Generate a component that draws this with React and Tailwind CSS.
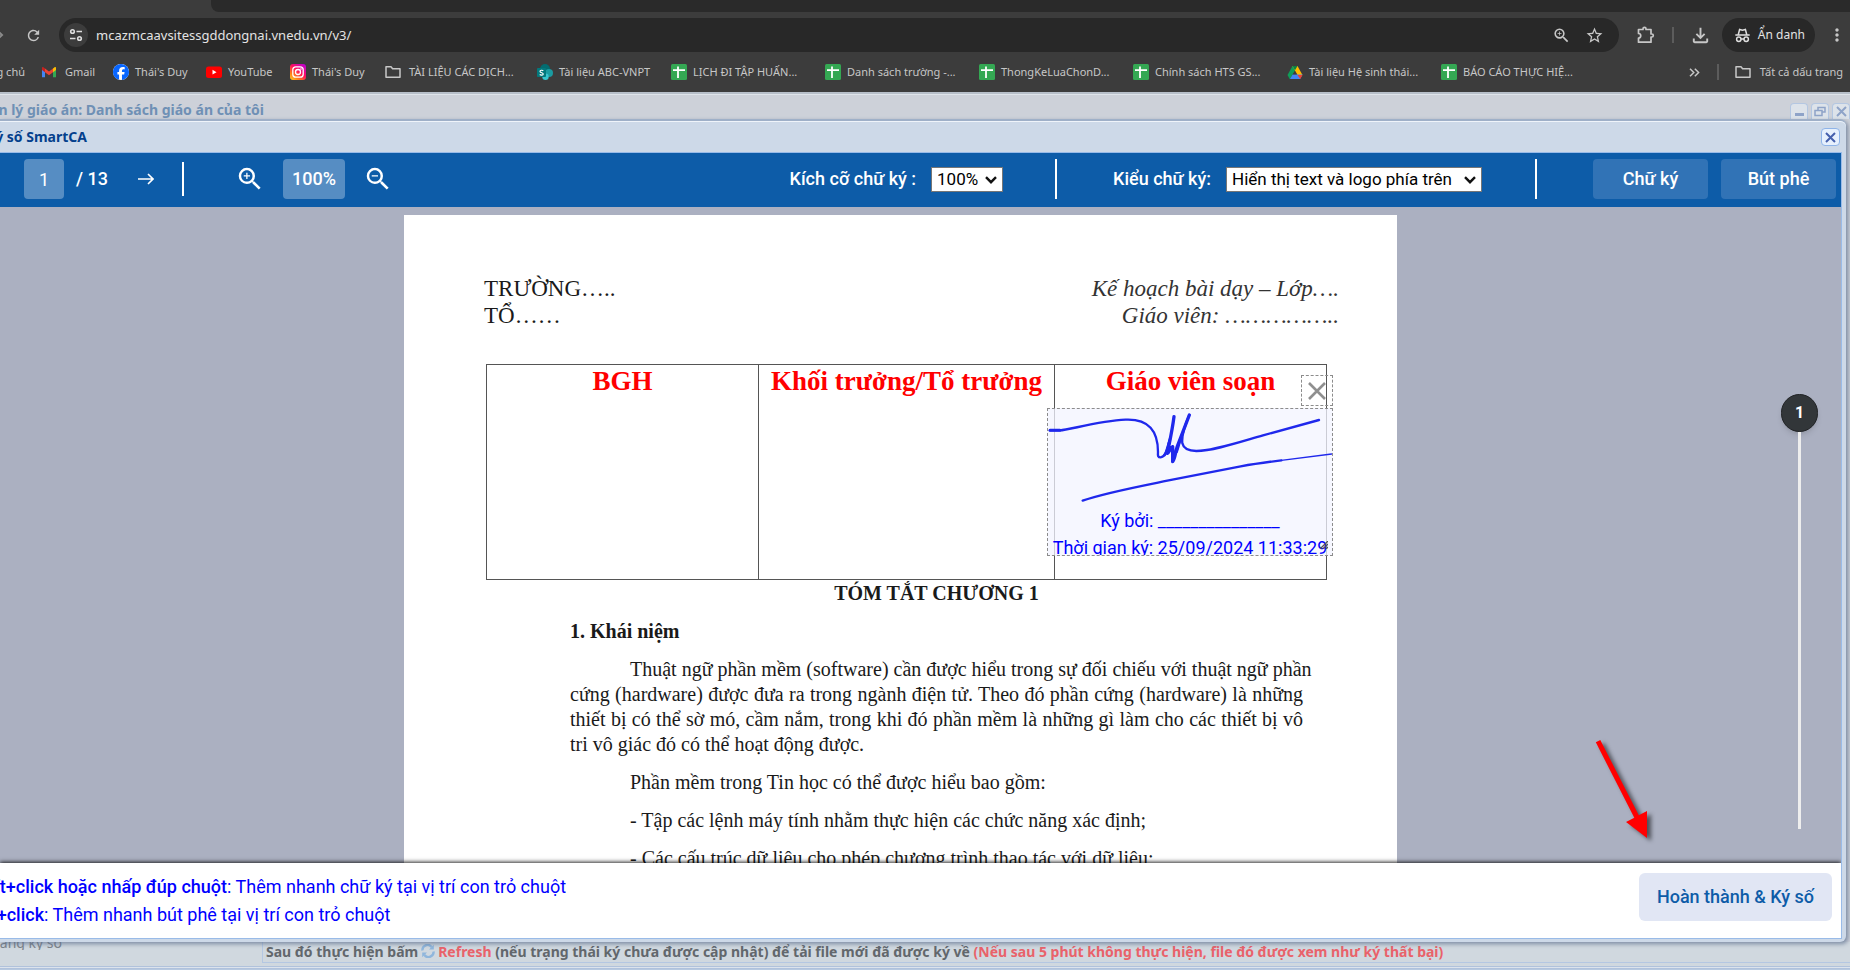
import React from "react";
import { FaFacebook } from "react-icons/fa6";
import {
  MdRefresh,
  MdZoomIn,
  MdZoomOut,
  MdStarBorder,
  MdOutlineFileDownload,
  MdMoreVert,
} from "react-icons/md";

const noto = "font-['Noto_Sans',sans-serif]";

function FolderIcon() {
  return (
    <svg width="16" height="16" viewBox="0 0 16 16" fill="none" stroke="#c7c7c7" strokeWidth="1.5">
      <path d="M1 13.2V2.8h5l1.6 2H15v8.400z" strokeLinejoin="round" />
    </svg>
  );
}

function SheetIcon() {
  return (
    <svg width="16" height="16" viewBox="0 0 16 16">
      <rect width="16" height="16" rx="1.5" fill="#34a853" />
      <path d="M2 6.200h12M7 2.500v11.500" stroke="#fff" strokeWidth="1.800" />
    </svg>
  );
}

function GmailIcon() {
  return (
    <svg width="16" height="16" viewBox="0 0 16 16">
      <path d="M1 4v9.300h3V7z" fill="#4285f4" />
      <path d="M15 4v9.300h-3V7z" fill="#34a853" />
      <path d="M12 4.500 13.600 3.200c.6-.4 1.400 0 1.400.9V6l-3 2.200z" fill="#fbbc04" />
      <path d="M4 4.500 2.400 3.200C1.800 2.800 1 3.200 1 4.100V6l3 2.200z" fill="#c5221f" />
      <path d="M4 4.400 8 7.400l4-3v3.800l-4 3-4-3z" fill="#ea4335" />
    </svg>
  );
}

function FacebookIcon() {
  return (
    <span className="flex size-4 rounded-full bg-white">
      <FaFacebook size={16} color="#0866ff" />
    </span>
  );
}

function YouTubeIcon() {
  return (
    <svg width="16" height="16" viewBox="0 0 16 16">
      <rect y="2.500" width="16" height="11.500" rx="2.500" fill="#f00" />
      <path d="m6.500 5.800 4 2.400-4 2.400z" fill="#fff" />
    </svg>
  );
}

function InstagramIcon() {
  return (
    <svg width="16" height="16" viewBox="0 0 16 16" fill="none">
      <defs>
        <linearGradient id="insta" x1="0.1" y1="1" x2="0.9" y2="0">
          <stop offset="0" stopColor="#ffc327" />
          <stop offset="0.25" stopColor="#ff7a18" />
          <stop offset="0.55" stopColor="#ff0f5f" />
          <stop offset="1" stopColor="#b900d6" />
        </linearGradient>
      </defs>
      <rect width="16" height="16" rx="3" fill="url(#insta)" />
      <rect x="2.800" y="2.800" width="10.400" height="10.400" rx="3" stroke="#fff" strokeWidth="1.300" />
      <circle cx="8" cy="8" r="2.500" stroke="#fff" strokeWidth="1.300" />
      <circle cx="11" cy="5" r=".8" fill="#fff" />
    </svg>
  );
}

function SharePointIcon() {
  return (
    <svg width="16" height="16" viewBox="0 0 16 16">
      <circle cx="8" cy="5" r="5" fill="#036c70" />
      <circle cx="12" cy="9" r="4" fill="#1a9ba1" />
      <circle cx="8.500" cy="12.800" r="3.200" fill="#37c6d0" />
      <rect y="4" width="9" height="9" rx="1" fill="#03787c" />
      <path d="M6.300 6.700C5.400 6 3 6 3 7.500s3.200 1 3.200 2.400-2.300 1.500-3.500.7" fill="none" stroke="#fff" strokeWidth="1.200" />
    </svg>
  );
}

function DriveIcon() {
  return (
    <svg width="16" height="16" viewBox="0 0 16 16">
      <path d="M5.500 2h5l-5.200 9L2.800 15.200.5 11z" fill="#0f9d58" />
      <path d="M5.500 2h5l5 9h-5z" fill="#ffba00" />
      <path d="M5.600 10.500h9.900L13.200 15H2.900z" fill="#4285f4" />
      <path d="M5.500 2h5L8 6.300z" fill="#0b8043" />
      <path d="M15.500 11h-5l2.700 4z" fill="#ea4335" />
      <path d="M6.300 10.300 8 7.300l1.700 3z" fill="#3c3c3c" />
    </svg>
  );
}

const bookmarks = [
  { w: "w-[72px]", gap: "gap-2", icon: <GmailIcon />, label: "Gmail" },
  { w: "w-[93px]", gap: "gap-1.5", icon: <FacebookIcon />, label: "Thái's Duy" },
  { w: "w-[84px]", gap: "gap-1.5", icon: <YouTubeIcon />, label: "YouTube" },
  { w: "w-[95px]", gap: "gap-1.5", icon: <InstagramIcon />, label: "Thái's Duy" },
  { w: "w-[152px]", gap: "gap-2", icon: <FolderIcon />, label: "TÀI LIỆU CÁC DỊCH..." },
  { w: "w-[134px]", gap: "gap-1.5", icon: <SharePointIcon />, label: "Tài liệu ABC-VNPT" },
  { w: "w-[154px]", gap: "gap-1.5", icon: <SheetIcon />, label: "LỊCH ĐI TẬP HUẤN..." },
  { w: "w-[154px]", gap: "gap-1.5", icon: <SheetIcon />, label: "Danh sách trường -..." },
  { w: "w-[154px]", gap: "gap-1.5", icon: <SheetIcon />, label: "ThongKeLuaChonD..." },
  { w: "w-[154px]", gap: "gap-1.5", icon: <SheetIcon />, label: "Chính sách HTS GS..." },
  { w: "w-[154px]", gap: "gap-1.5", icon: <DriveIcon />, label: "Tài liệu Hệ sinh thái..." },
  { w: "w-[154px]", gap: "gap-1.5", icon: <SheetIcon />, label: "BÁO CÁO THỰC HIỆ..." },
];

function BrowserChrome() {
  return (
    <header className={`shrink-0 bg-[#3c3c3c] text-[#c7c7c7] ${noto}`}>
      <div className="flex h-3">
        <div className="w-[211px]" />
        <div className="flex-1 rounded-bl-lg bg-[#2a2a2a]" />
      </div>
      <div className="flex h-[46px] items-center pr-[3px]">
        <svg width="6" height="12" viewBox="0 0 6 12" className="mr-[19px]">
          <path d="M-3 1.500 2 6l-5 4.500" fill="none" stroke="#8a8a8a" strokeWidth="2" />
        </svg>
        <button aria-label="Tải lại" className="flex size-4 items-center justify-center">
          <MdRefresh size={17} className="shrink-0" />
        </button>
        <div className="ml-[18px] flex h-[34px] flex-1 items-center rounded-full bg-[#282828] pr-[15px] pl-[5px]">
          <span className="flex size-6 items-center justify-center rounded-full bg-[#3c3c3c]">
            <svg width="14" height="14" viewBox="0 0 14 14" fill="none" stroke="#dedede" strokeWidth="1.600">
              <circle cx="3.500" cy="3.500" r="1.800" />
              <path d="M7.500 3.500H13M1 10.500h5.500" />
              <circle cx="10.500" cy="10.500" r="1.800" />
            </svg>
          </span>
          <label htmlFor="url" className="sr-only">Địa chỉ</label>
          <input
            id="url"
            defaultValue="mcazmcaavsitessgddongnai.vnedu.vn/v3/"
            className="ml-2 h-6 flex-1 bg-transparent text-[13px] text-[#e3e3e3] outline-none"
          />
          <button aria-label="Thu phóng" className="mr-[14px]">
            <MdZoomIn size={19} />
          </button>
          <button aria-label="Dấu trang">
            <MdStarBorder size={19} />
          </button>
        </div>
        <button aria-label="Tiện ích" className="ml-[18px]">
          <svg width="18" height="18" viewBox="0 0 18 18" fill="none" stroke="#c7c7c7" strokeWidth="1.700">
            <path d="M1.500 3.500H6V2.800a1.500 1.500 0 0 1 3 0v.7h5V8h.8a1.500 1.500 0 0 1 0 3H14v5.200H1.500V12a2 2 0 0 0 0-4.500z" strokeLinejoin="round" />
          </svg>
        </button>
        <span className="ml-[17px] h-4 w-0.5 bg-[#5c5c5c]" />
        <button aria-label="Tải xuống" className="ml-[15px]">
          <MdOutlineFileDownload size={23} />
        </button>
        <button className="ml-[10px] flex h-[34px] items-center gap-2 rounded-full bg-[#282828] pr-[10px] pl-[13px] text-xs text-[#e3e3e3]">
          <svg width="15" height="15" viewBox="0 0 15 15" fill="none" stroke="#dedede" strokeWidth="1.500">
            <path d="M3.300 6.500 4.600 1.500 7.500 2.300l2.900-.8 1.300 5M.3 7h14.400" />
            <circle cx="3.800" cy="11.300" r="2.200" />
            <circle cx="11.200" cy="11.300" r="2.200" />
            <path d="M6 11h3" />
          </svg>
          Ẩn danh
        </button>
        <button aria-label="Menu" className="ml-3">
          <MdMoreVert size={20} />
        </button>
      </div>
      <nav className="flex h-[34px] items-start overflow-hidden pt-1.5 pr-[7px] text-[11px] leading-4">
        <a href="#home" className="mr-4 flex w-[25px] justify-end whitespace-nowrap">
          Trang chủ
        </a>
        {bookmarks.map((b, i) => (
          <a key={i} href="#bookmark" className={`flex shrink-0 items-center whitespace-nowrap ${b.w} ${b.gap}`}>
            {b.icon}
            {b.label}
          </a>
        ))}
        <button aria-label="Thêm dấu trang" className="ml-auto flex h-4 items-center">
          <svg width="11" height="9" viewBox="0 0 11 9" fill="none" stroke="#c7c7c7" strokeWidth="1.500">
            <path d="m1 .7 3.800 3.800L1 8.300M5.800.7l3.800 3.800-3.800 3.800" />
          </svg>
        </button>
        <span className="mr-4 ml-[17px] h-4 w-0.5 bg-[#5c5c5c]" />
        <a href="#all" className="flex items-center gap-[9px] whitespace-nowrap">
          <FolderIcon />
          Tất cả dấu trang
        </a>
      </nav>
    </header>
  );
}

function CrossIcon({ color }) {
  return (
    <svg width="11" height="11" viewBox="0 0 11 11" stroke={color} strokeWidth="2">
      <path d="m1 1 9 9M10 1l-9 9" />
    </svg>
  );
}

function BackgroundTitle() {
  const box =
    "flex h-4 w-[18px] items-center justify-center rounded-t border border-b-0 border-[#b4c7e2] bg-[#dde3ea]";
  return (
    <div className="flex h-[27px] shrink-0 items-end border-t-2 border-[#b7bfc9] bg-[#cdd1d9] shadow-[inset_0_1px_0_#dfe4ea]">
      <h2 className={`flex w-[264px] justify-end text-sm leading-[18px] font-bold whitespace-nowrap text-[#6f90b5] ${noto}`}>
        Quản lý giáo án: Danh sách giáo án của tôi
      </h2>
      <div className="ml-auto flex gap-[3px]">
        <button aria-label="Thu nhỏ" className={box}>
          <span className="mt-1.5 h-[3px] w-[9px] bg-[#8ea3c8]" />
        </button>
        <button aria-label="Khôi phục" className={box}>
          <svg width="12" height="11" viewBox="0 0 12 11" fill="none" stroke="#8ea3c8" strokeWidth="1.500">
            <path d="M4 4V1.500h7V6H8.500M1 4.500h7V9.500H1z" />
          </svg>
        </button>
        <button aria-label="Đóng" className={box}>
          <CrossIcon color="#8ea3c8" />
        </button>
      </div>
    </div>
  );
}

function Select({ id, width, options }) {
  return (
    <span className={`relative flex ${width}`}>
      <select
        id={id}
        className="h-[25px] w-full appearance-none border border-[#767676] bg-white pl-[5px] text-[17px] leading-5 text-black"
      >
        {options.map((o) => (
          <option key={o}>{o}</option>
        ))}
      </select>
      <svg width="12" height="8" viewBox="0 0 12 8" fill="none" stroke="#111" strokeWidth="2.400" className="pointer-events-none absolute top-[9px] right-1.5">
        <path d="m1 1.200 5 5 5-5" />
      </svg>
    </span>
  );
}

function Toolbar() {
  const action = "h-10 w-[115px] rounded bg-[#3173b6]";
  return (
    <div className="flex h-[54px] shrink-0 items-center bg-[#0d5ca8] pb-0.5 pr-[5px] pl-6 text-lg font-medium text-white">
      <label htmlFor="page" className="sr-only">Trang</label>
      <input id="page" defaultValue="1" className="h-10 w-10 rounded bg-[#568dc3] text-center font-normal outline-none" />
      <span className="ml-3 w-8 whitespace-nowrap">/ 13</span>
      <button aria-label="Trang sau" className="ml-[30px]">
        <svg width="16" height="12" viewBox="0 0 16 12" fill="none" stroke="#fff" strokeWidth="1.600">
          <path d="M0 6h15M10 1l5 5-5 5" />
        </svg>
      </button>
      <span className="ml-7 h-[34px] w-0.5 bg-white" />
      <button aria-label="Phóng to" className="ml-[51px]">
        <MdZoomIn size={30} />
      </button>
      <button className="ml-[18px] h-10 w-[62px] rounded bg-[#568dc3]">100%</button>
      <button aria-label="Thu nhỏ trang" className="ml-[18px]">
        <MdZoomOut size={30} />
      </button>
      <div className="ml-auto flex items-center">
        <label htmlFor="sign-size" className="mr-[15px] whitespace-nowrap">Kích cỡ chữ ký :</label>
        <Select id="sign-size" width="w-[72px] font-normal" options={["100%", "75%", "50%"]} />
        <span className="mr-[56px] ml-[52px] h-10 w-0.5 bg-white" />
        <label htmlFor="sign-style" className="mr-[15px] whitespace-nowrap">Kiểu chữ ký:</label>
        <Select id="sign-style" width="w-64 font-normal" options={["Hiển thị text và logo phía trên", "Chỉ hiển thị text"]} />
        <span className="mr-14 ml-[53px] h-10 w-0.5 bg-white" />
        <button className={action}>Chữ ký</button>
        <button className={`ml-[13px] ${action}`}>Bút phê</button>
      </div>
    </div>
  );
}

function Signature() {
  return (
    <div className="absolute top-[160px] left-[643px] flex w-[286px] flex-col items-end font-[Roboto,sans-serif]">
      <button aria-label="Xóa chữ ký" className="flex h-[31px] w-8 items-center justify-center border border-dashed border-[#8c8c8c]">
        <svg width="18" height="18" viewBox="0 0 18 18" stroke="#8f8f8f" strokeWidth="2.600">
          <path d="m1 1 16 16M17 1 1 17" />
        </svg>
      </button>
      <div className="relative mt-0.5 h-[148px] w-full overflow-hidden border border-dashed border-[#8c8c8c] bg-[#f3f4ff]/75 text-center text-lg leading-[27px] whitespace-nowrap text-[#0000ff]">
        <svg width="284" height="98" viewBox="0 0 852 294" fill="none" stroke="#1f28ec" strokeLinecap="round" strokeLinejoin="round">
          <path d="M6 64h30C60 64 150 36 233 32c70-3 97 35 97 97-1 12 0 16 8 16 14 0 18-22 26-50" strokeWidth="7" />
          <path d="M378 23c-5 40-13 75-20 110 6-2 10-18 16-20v45c8-12 8-30 14-46l36-94" strokeWidth="10" />
          <path d="M350 138c8-10 12-30 16-48M386 128c4-10 6-20 12-40" strokeWidth="8" />
          <path d="M424 18c-14 32-24 60-21 85 4 18 20 23 42 23 50 0 130-27 200-47l168-46" strokeWidth="7" />
          <path d="M6 64h30" strokeWidth="9" />
          <path d="M104 275c60-22 160-41 254-60 80-16 150-30 220-43 45-8 82-13 122-18" strokeWidth="7" />
          <path d="M700 154 851 135" strokeWidth="4" />
        </svg>
        <p>Ký bởi: _______________</p>
        <p>Thời gian ký: 25/09/2024 11:33:29</p>
        <svg width="8" height="8" viewBox="0 0 8 8" stroke="#555" strokeWidth="1.300" className="absolute right-1 bottom-1.5">
          <path d="M0 8 8 0M3 8l5-5M6 8l2-2" />
        </svg>
      </div>
    </div>
  );
}

const definition = [
  "Thuật ngữ phần mềm (software) cần được hiểu trong sự đối chiếu với thuật ngữ phần",
  "cứng (hardware) được đưa ra trong ngành điện tử. Theo đó phần cứng (hardware) là những",
  "thiết bị có thể sờ mó, cầm nắm, trong khi đó phần mềm là những gì làm cho các thiết bị vô",
];

function DocumentPage() {
  const cell = "border border-[#555] pt-px align-top";
  return (
    <article className="relative h-[1404px] w-[993px] shrink-0 bg-white pt-[60px] font-['Liberation_Serif',serif] text-[#1a1a1a]">
      <div className="flex justify-between pr-[58px] pl-20 text-[23px] leading-[27px]">
        <div>
          <p>TRƯỜNG…..</p>
          <p>TỔ……</p>
        </div>
        <div className="text-right text-[#333] italic">
          <p>Kế hoạch bài dạy – Lớp….</p>
          <p>Giáo viên: ……………..</p>
        </div>
      </div>
      <table className="mt-[35px] ml-[82px] h-[216px] w-[841px] table-fixed border-collapse text-[27px] leading-[30px] text-[#ff0000]">
        <thead>
          <tr>
            <th className={`w-[272px] ${cell}`}>BGH</th>
            <th className={`w-[296px] ${cell}`}>Khối trưởng/Tổ trưởng</th>
            <th className={cell}>Giáo viên soạn</th>
          </tr>
        </thead>
      </table>
      <div className="flex flex-col gap-[13px] pt-px pr-[94px] pl-[166px] text-xl leading-[25px]">
        <h1 className="text-center font-bold">TÓM TẮT CHƯƠNG 1</h1>
        <h2 className="font-bold">1. Khái niệm</h2>
        <p>
          {definition.map((line, i) => (
            <span key={i} className="block [text-align-last:justify] whitespace-nowrap first:pl-[60px]">
              {line}
            </span>
          ))}
          tri vô giác đó có thể hoạt động được.
        </p>
        <p className="indent-[60px]">Phần mềm trong Tin học có thể được hiểu bao gồm:</p>
        <p className="indent-[60px]">- Tập các lệnh máy tính nhằm thực hiện các chức năng xác định;</p>
        <p className="indent-[60px]">- Các cấu trúc dữ liệu cho phép chương trình thao tác với dữ liệu;</p>
      </div>
      <Signature />
    </article>
  );
}

function PageSlider() {
  return (
    <div className="absolute top-[187px] right-[23px] bottom-[34px] flex w-[37px] flex-col items-center">
      <span className="flex h-[38px] w-[37px] shrink-0 items-center justify-center rounded-full border border-[#202224] bg-[#323639] text-base font-bold text-white shadow-md">
        1
      </span>
      <span className="w-[3px] flex-1 bg-[#eeeeee]" />
    </div>
  );
}

function PointerArrow() {
  return (
    <svg
      width="70"
      height="110"
      viewBox="0 0 70 110"
      fill="#ff0000"
      className="absolute right-[184px] bottom-[17px] drop-shadow-[4px_3px_2px_rgba(0,0,0,0.55)]"
    >
      <path d="M8.800 6.300 13.300 4 51.800 79.300 60 75v27L39 86l8.300-4.300z" />
    </svg>
  );
}

function Dialog() {
  return (
    <section className="relative z-10 mr-1 flex min-h-0 flex-1 flex-col rounded-r-md border-t-2 border-[#9fb0c8] bg-[#cdd9e8] shadow-[2px_2px_4px_rgba(90,110,140,0.7)]">
      <div className="flex h-[31px] shrink-0 items-center rounded-tr-md border-t border-[#eff4fa] pr-1.5">
        <h1 className={`flex w-[87px] justify-end text-sm font-bold whitespace-nowrap text-[#04408c] ${noto}`}>
          Ký số SmartCA
        </h1>
        <button aria-label="Đóng hộp thoại" className="ml-auto flex h-[18px] w-[19px] items-center justify-center rounded border border-[#8fb4e8] bg-[#e6f0fd]">
          <CrossIcon color="#4560ad" />
        </button>
      </div>
      <div className="mr-1 mb-[3px] flex min-h-0 flex-1 flex-col overflow-hidden border border-l-0 border-[#99bbe8] font-[Roboto,sans-serif]">
        <Toolbar />
        <div className="relative flex min-h-0 flex-1 items-start justify-center overflow-hidden bg-[#abb0c1] pt-2 pr-10">
          <DocumentPage />
          <PageSlider />
          <PointerArrow />
        </div>
        <footer className="relative flex h-[75px] shrink-0 items-start justify-between bg-white pt-[10px] pr-[9px] shadow-[0_-1px_4px_rgba(0,0,0,0.85)]">
          <div className="-ml-8 text-lg leading-7 whitespace-nowrap text-[#0000ff]">
            <p><strong className="font-medium">Shift+click hoặc nhấp đúp chuột</strong>: Thêm nhanh chữ ký tại vị trí con trỏ chuột</p>
            <p><strong className="font-medium">Ctrl+click</strong>: Thêm nhanh bút phê tại vị trí con trỏ chuột</p>
          </div>
          <button className="h-12 w-[193px] rounded-md bg-[#e1e6f4] text-lg font-medium text-[#0d5ca8]">
            Hoàn thành &amp; Ký số
          </button>
        </footer>
      </div>
    </section>
  );
}

function RefreshIcon() {
  return (
    <svg width="14" height="14" viewBox="0 0 14 14" fill="none" stroke="#8fb6dc" strokeWidth="2.400" className="mx-[3px] inline-block align-[-1px]">
      <path d="M1.500 6.500A5 5 0 0 1 10.500 3M12.500 7.500A5 5 0 0 1 3.500 11" />
      <path d="M12.800.8v4.700H8zM1.200 13.200V8.500H6z" fill="#8fb6dc" stroke="none" />
    </svg>
  );
}

function StatusRow() {
  return (
    <div className={`flex h-7 shrink-0 flex-col bg-[#d0d8df] text-sm ${noto}`}>
      <div className="flex h-[21px]">
        <div className="w-[262px] shrink-0">
          <p className="flex h-2 w-[62px] items-end justify-end overflow-hidden leading-[14px] whitespace-nowrap text-[#7c838a]">
            Trạng thái đang ký số
          </p>
        </div>
        <p className="flex-1 border-b border-l border-[#b4c7e2] pl-[3px] leading-5 font-bold whitespace-nowrap text-[#62676c]">
          Sau đó thực hiện bấm
          <RefreshIcon />
          <a href="#refresh" className="text-[#e9626a]">Refresh</a> (nếu trạng thái ký chưa được cập nhật) để tải file mới
          đã được ký về <span className="text-[#e9626a]">(Nếu sau 5 phút không thực hiện, file đó được xem như ký thất bại)</span>
        </p>
      </div>
      <div className="mt-[3px] h-[3px] border-y border-[#b0c2dc] bg-[#dce3ec]" />
      <div className="flex-1 bg-[#b7c9e0]" />
    </div>
  );
}

export default function App() {
  return (
    <div className="flex h-screen flex-col overflow-hidden bg-[#cdd1d9]">
      <BrowserChrome />
      <BackgroundTitle />
      <Dialog />
      <StatusRow />
    </div>
  );
}
